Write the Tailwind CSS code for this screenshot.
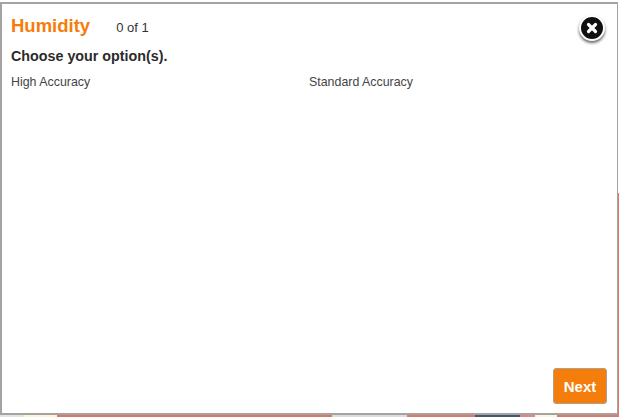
<!DOCTYPE html>
<html lang="en">
<head>
  <meta charset="UTF-8">
  <title>Humidity</title>
  <script src="https://cdn.jsdelivr.net/npm/@tailwindcss/browser@4"></script>
</head>
<body class="w-[619px] h-[417px] overflow-hidden bg-white font-['Liberation_Sans',Arial,sans-serif]">
  <div class="relative w-[619px] h-[417px]">
    <!-- page peeking out under the modal -->
    <div class="absolute inset-x-0 bottom-0 flex h-[3px] bg-[#e0776a]">
      <div class="w-[24px] bg-[#e4e4e4]"></div>
      <div class="w-[33px] bg-[#fdf3d0]"></div>
      <div class="w-[275px] bg-[#dd7565]"></div>
      <div class="w-[75px] bg-[#dcdcdc]"></div>
      <div class="w-[68px] bg-[#e0776a]"></div>
      <div class="w-[45px] bg-[#46566e]"></div>
      <div class="w-[15px] bg-[#e8857a]"></div>
      <div class="w-[22px] bg-[#fdf6dc]"></div>
      <div class="flex-1 bg-[#e0776a]"></div>
    </div>
    <div class="absolute top-[193px] right-0 bottom-0 w-px bg-[#e0776a]"></div>

    <div class="relative top-[2px] flex h-[413px] w-[618px] flex-col border-2 border-r border-[#a3a3a3] bg-white pl-[9px] pr-[10px]">
      <div class="flex h-[39px] items-center pt-[5px]">
        <h2 class="text-[18.5px] font-bold leading-none text-[#f47d0c]">Humidity</h2>
        <span class="ml-[26px] pt-[3px] text-[13px] leading-none text-[#333]">0 of 1</span>
      </div>
      <p class="mt-[3px] text-[14.3px] font-bold leading-[20px] text-[#2b2b2b]">Choose your option(s).</p>
      <div class="mt-[8px] grid grid-cols-[298px_1fr] text-[12.4px] leading-[16px] text-[#444]">
        <span>High Accuracy</span>
        <span>Standard Accuracy</span>
      </div>

      <button class="absolute right-[10px] bottom-[9px] h-[36px] w-[54px] rounded-[3px] border border-[#b0a090] bg-[#f47d0c] pt-[2px] text-[15px] font-bold text-white">Next</button>

      <button class="absolute top-[11px] right-[12px] flex size-[26px] items-center justify-center rounded-full border-2 border-white bg-[#111] shadow-[0_2px_3px_rgba(0,0,0,0.6)]">
        <svg width="12" height="12" viewBox="0 0 12 12">
          <path d="M2.5 2.5 L9.5 9.5 M9.5 2.5 L2.5 9.5" stroke="#fff" stroke-width="3.2" stroke-linecap="round"/>
        </svg>
      </button>
    </div>
  </div>
</body>
</html>
